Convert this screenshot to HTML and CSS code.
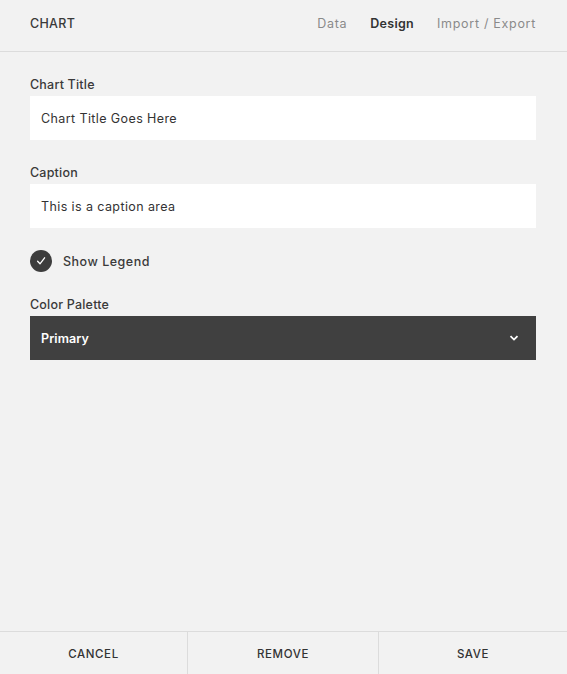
FILE: index.html
```html
<!DOCTYPE html>
<html>
<head>
<meta charset="utf-8">
<link rel="stylesheet" href="styles.css">
</head>
<body>
<div class="panel">
  <header class="header">
    <div class="title">CHART</div>
    <nav class="tabs">
      <span class="tab">Data</span>
      <span class="tab active">Design</span>
      <span class="tab">Import / Export</span>
    </nav>
  </header>
  <main class="content">
    <div class="field">
      <div class="label">Chart Title</div>
      <div class="input">Chart Title Goes Here</div>
    </div>
    <div class="field">
      <div class="label">Caption</div>
      <div class="input">This is a caption area</div>
    </div>
    <div class="check">
      <span class="circle">
        <svg width="10" height="10" viewBox="0 0 10 10"><path d="M1.6 5.3 L4 7.8 L8.6 1.8" fill="none" stroke="#fff" stroke-width="1.3" stroke-linecap="round" stroke-linejoin="round"/></svg>
      </span>
      <span class="check-label">Show Legend</span>
    </div>
    <div class="field">
      <div class="label">Color Palette</div>
      <div class="select">
        <span>Primary</span>
        <svg width="10" height="8" viewBox="0 0 10 8"><path d="M1.5 2.2 L5 5.6 L8.5 2.2" fill="none" stroke="#fff" stroke-width="1.8"/></svg>
      </div>
    </div>
  </main>
  <footer class="footer">
    <div class="btn">CANCEL</div>
    <div class="btn">REMOVE</div>
    <div class="btn">SAVE</div>
  </footer>
</div>
</body>
</html>
```
FILE: styles.css
```css
html, body {
  margin: 0;
  padding: 0;
  background: #f2f2f2;
}
body {
  font-family: Inter, "Open Sans", "Liberation Sans", sans-serif;
  color: #3e3e3e;
}
.panel {
  height: 674px;
  display: flex;
  flex-direction: column;
}
.header {
  border-bottom: 1px solid #dcdcdc;
  display: flex;
  align-items: flex-start;
  justify-content: space-between;
  padding: 15px 31px 0 30px;
  box-sizing: border-box;
  height: 52px;
}
.title {
  font-size: 12.5px;
  line-height: 17px;
  font-weight: 500;
  letter-spacing: 0.3px;
  color: #3a3a3a;
}
.tabs {
  display: flex;
  gap: 23px;
}
.tab {
  font-size: 12.5px;
  line-height: 17px;
  letter-spacing: 0.7px;
  color: #8a8a8a;
}
.tab.active {
  color: #333;
  font-weight: 600;
  letter-spacing: 0.3px;
}
.content {
  flex: 1;
  padding: 24px 31px 0 30px;
  display: flex;
  flex-direction: column;
}
.field {
  display: flex;
  flex-direction: column;
  gap: 3px;
  margin-bottom: 24px;
}
.label {
  font-size: 12.5px;
  line-height: 17px;
  font-weight: 500;
  letter-spacing: 0.2px;
  color: #3a3a3a;
}
.input {
  height: 44px;
  background: #fff;
  display: flex;
  align-items: center;
  padding: 0 11px;
  font-size: 12.5px;
  letter-spacing: 0.4px;
  color: #333;
}
.check {
  display: flex;
  align-items: center;
  gap: 11px;
  margin-top: -2px;
  margin-bottom: 24px;
}
.circle {
  width: 22px;
  height: 22px;
  border-radius: 50%;
  background: #3d3d3d;
  display: flex;
  align-items: center;
  justify-content: center;
}
.check-label {
  font-size: 12.5px;
  font-weight: 500;
  color: #3a3a3a;
  letter-spacing: 0.5px;
}
.select {
  height: 44px;
  background: #404040;
  color: #fff;
  display: flex;
  align-items: center;
  justify-content: space-between;
  padding: 0 17px 0 11px;
  font-size: 12.5px;
  font-weight: 600;
  letter-spacing: 0.1px;
}
.footer {
  height: 42px;
  border-top: 1px solid #dcdcdc;
  display: grid;
  grid-template-columns: 187px 191px 1fr;
}
.btn {
  display: flex;
  align-items: center;
  justify-content: center;
  padding-top: 2px;
  font-size: 11.5px;
  font-weight: 500;
  letter-spacing: 0.6px;
  color: #333;
  border-left: 1px solid #dcdcdc;
}
.btn:first-child {
  border-left: none;
}
```
